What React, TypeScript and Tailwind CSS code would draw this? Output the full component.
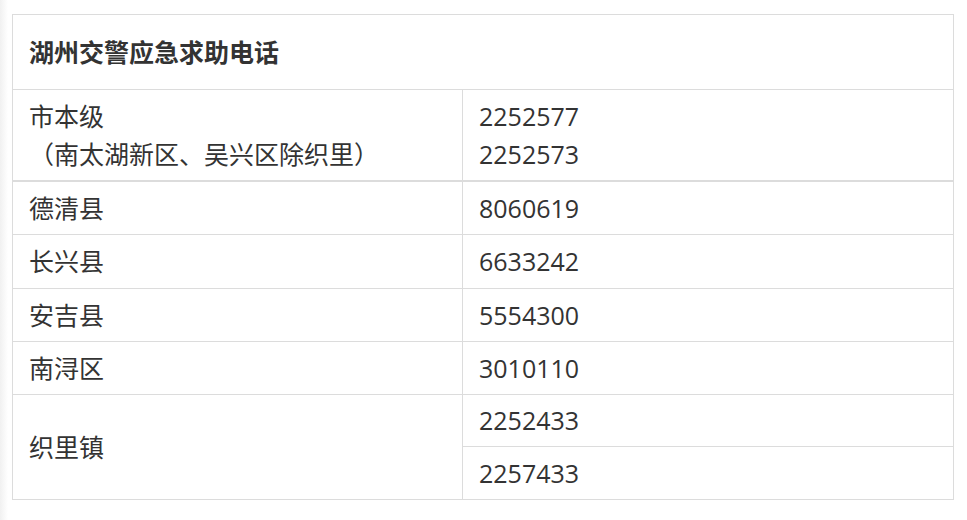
import React from "react";

const font = { fontFamily: '"Open Sans", "Noto Sans CJK SC", sans-serif' };

export default function App() {
  return (
    <div className="flex h-[520px] w-[967px] bg-white text-[#333]" style={font}>
      <div className="h-full w-[8px] bg-gradient-to-r from-[#f1f1f1] to-white" />
      <div className="ml-[4px] mt-[14px] flex h-[486px] w-[942px] flex-col border border-[#dcdcdc]">
        <div className="flex h-[75px] items-center border-b border-[#dcdcdc] pl-[16px] text-[25px] font-bold leading-none">
          湖州交警应急求助电话
        </div>
        <div className="flex h-[92px] border-b-2 border-[#dcdcdc]">
          <div className="flex w-[450px] flex-col justify-center border-r border-[#dcdcdc] pl-[16px] text-[25px] leading-[38px]">
            <div>市本级</div>
            <div>（南太湖新区、吴兴区除织里）</div>
          </div>
          <div className="flex flex-1 flex-col justify-center pl-[16px] text-[25px] leading-[38px]">
            <div>2252577</div>
            <div>2252573</div>
          </div>
        </div>
        {[
          ["德清县", "8060619", "h-[53px]"],
          ["长兴县", "6633242", "h-[54px]"],
          ["安吉县", "5554300", "h-[53px]"],
          ["南浔区", "3010110", "h-[53px]"],
        ].map(([a, b, h]) => (
          <div key={a} className={`flex ${h} border-b border-[#dcdcdc] text-[25px] leading-none`}>
            <div className="flex w-[450px] items-center border-r border-[#dcdcdc] pl-[16px]">{a}</div>
            <div className="flex flex-1 items-center pl-[16px]">{b}</div>
          </div>
        ))}
        <div className="flex flex-1 text-[25px] leading-none">
          <div className="flex w-[450px] items-center border-r border-[#dcdcdc] pl-[16px]">织里镇</div>
          <div className="flex flex-1 flex-col">
            <div className="flex h-[52px] items-center border-b border-[#dcdcdc] pl-[16px]">2252433</div>
            <div className="flex flex-1 items-center pl-[16px]">2257433</div>
          </div>
        </div>
      </div>
    </div>
  );
}
